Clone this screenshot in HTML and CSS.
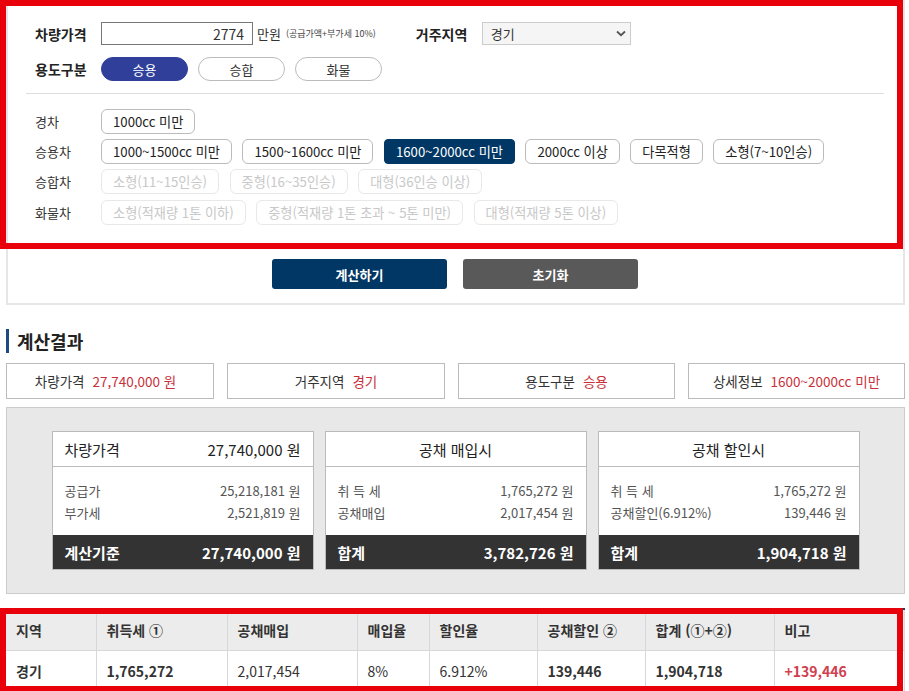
FILE: index.html
```html
<!doctype html>
<html lang="ko">
  <head>
    <meta charset="UTF-8" />
    <title>취득세 계산기</title>
    <link rel="stylesheet" href="styles.css">
  </head>

  <body>
    <div id="wrap">
      <div class="calc_box">
        <div class="line">
          <span class="tit">차량가격</span>
          <input type="text" class="price_input" value="2774" />
          <span class="unit">만원</span>
          <span class="note">(공급가액+부가세 10%)</span>
          <span class="tit tit_area">거주지역</span>
          <div class="select_box">
            <span>경기</span>
            <svg width="10" height="7" viewBox="0 0 10 7"><path d="M1 1.5 L5 5.2 L9 1.5" fill="none" stroke="#555" stroke-width="1.8"/></svg>
          </div>
        </div>
        <div class="line line_use">
          <span class="tit">용도구분</span>
          <button class="pill on">승용</button>
          <button class="pill">승합</button>
          <button class="pill">화물</button>
        </div>

        <div class="divider"></div>

        <div class="cc_row">
          <span class="cc_tit">경차</span>
          <button class="cc">1000cc 미만</button>
        </div>
        <div class="cc_row">
          <span class="cc_tit">승용차</span>
          <button class="cc">1000~1500cc 미만</button>
          <button class="cc">1500~1600cc 미만</button>
          <button class="cc on">1600~2000cc 미만</button>
          <button class="cc">2000cc 이상</button>
          <button class="cc">다목적형</button>
          <button class="cc">소형(7~10인승)</button>
        </div>
        <div class="cc_row">
          <span class="cc_tit">승합차</span>
          <button class="cc off">소형(11~15인승)</button>
          <button class="cc off">중형(16~35인승)</button>
          <button class="cc off">대형(36인승 이상)</button>
        </div>
        <div class="cc_row">
          <span class="cc_tit">화물차</span>
          <button class="cc off">소형(적재량 1톤 이하)</button>
          <button class="cc off">중형(적재량 1톤 초과 ~ 5톤 미만)</button>
          <button class="cc off">대형(적재량 5톤 이상)</button>
        </div>

        <div class="btn_area">
          <button class="btn_calc">계산하기</button>
          <button class="btn_reset">초기화</button>
        </div>
      </div>

      <h2 class="sec_tit">계산결과</h2>

      <ul class="summary">
        <li>차량가격<em>27,740,000 원</em></li>
        <li>거주지역<em>경기</em></li>
        <li>용도구분<em>승용</em></li>
        <li>상세정보<em>1600~2000cc 미만</em></li>
      </ul>

      <div class="result">
        <div class="card">
          <div class="card_head split"><span>차량가격</span><span>27,740,000 원</span></div>
          <div class="card_body">
            <p><span>공급가</span><span>25,218,181 원</span></p>
            <p><span>부가세</span><span>2,521,819 원</span></p>
          </div>
          <div class="card_foot"><span>계산기준</span><span>27,740,000 원</span></div>
        </div>
        <div class="card">
          <div class="card_head">공채 매입시</div>
          <div class="card_body">
            <p><span>취 득 세</span><span>1,765,272 원</span></p>
            <p><span>공채매입</span><span>2,017,454 원</span></p>
          </div>
          <div class="card_foot"><span>합계</span><span>3,782,726 원</span></div>
        </div>
        <div class="card">
          <div class="card_head">공채 할인시</div>
          <div class="card_body">
            <p><span>취 득 세</span><span>1,765,272 원</span></p>
            <p><span>공채할인(6.912%)</span><span>139,446 원</span></p>
          </div>
          <div class="card_foot"><span>합계</span><span>1,904,718 원</span></div>
        </div>
      </div>

      <table class="detail">
        <colgroup>
          <col style="width: 90px" />
          <col style="width: 131px" />
          <col style="width: 130px" />
          <col style="width: 72px" />
          <col style="width: 108px" />
          <col style="width: 108px" />
          <col style="width: 129px" />
          <col />
        </colgroup>
        <thead>
          <tr>
            <th>지역</th>
            <th>취득세 ①</th>
            <th>공채매입</th>
            <th>매입율</th>
            <th>할인율</th>
            <th>공채할인 ②</th>
            <th>합계 (①+②)</th>
            <th>비고</th>
          </tr>
        </thead>
        <tbody>
          <tr>
            <td class="b">경기</td>
            <td class="b">1,765,272</td>
            <td>2,017,454</td>
            <td>8%</td>
            <td>6.912%</td>
            <td class="b">139,446</td>
            <td class="b">1,904,718</td>
            <td class="b red">+139,446</td>
          </tr>
        </tbody>
      </table>
    </div>

    <div class="mark mark_top"></div>
    <div class="mark mark_bottom"></div>
  </body>
</html>
```

FILE: styles.css
```css
html,
body {
  margin: 0;
  padding: 0;
  background: #fff;
}

body {
  font-family: "Noto Sans CJK KR", "Noto Sans", sans-serif;
  color: #333;
  font-size: 13px;
  overflow: hidden;
}

button {
  font-family: inherit;
  cursor: pointer;
}

#wrap {
  width: 899px;
  margin-left: 6px;
}

/* 입력 영역 */
.calc_box {
  border: 2px solid #e6e6e6;
  padding: 20px 19px 14px 18px;
}

.line {
  display: flex;
  align-items: center;
  height: 23px;
  padding-left: 9px;
}

.line_use {
  height: 24px;
  margin-top: 12px;
}

.tit {
  width: 66px;
  font-size: 14px;
  font-weight: bold;
  color: #222;
}

.price_input {
  box-sizing: border-box;
  width: 152px;
  height: 23px;
  border: 1px solid #777;
  padding: 0 8px;
  text-align: right;
  font-family: inherit;
  font-size: 14px;
  color: #333;
}

.unit {
  margin-left: 4px;
  font-size: 13px;
}

.note {
  margin-left: 5px;
  font-size: 9px;
  color: #444;
}

.tit_area {
  margin-left: 40px;
}

.select_box {
  box-sizing: border-box;
  width: 149px;
  height: 23px;
  border: 1px solid #ccc;
  background: #f5f5f5;
  display: flex;
  align-items: center;
  justify-content: space-between;
  padding: 0 4px 0 8px;
  font-size: 13px;
  color: #333;
}

.pill {
  box-sizing: border-box;
  width: 87px;
  height: 24px;
  margin-right: 10px;
  border: 1px solid #bbb;
  border-radius: 12px;
  background: #fff;
  font-size: 13px;
  color: #333;
  padding: 0;
}

.pill.on {
  background: #30409a;
  border-color: #30409a;
  color: #fff;
}

.divider {
  height: 1px;
  background: #dedede;
  margin: 12px 0 15px;
}

.cc_row {
  display: flex;
  align-items: center;
  gap: 10.5px;
  padding-left: 9px;
  height: 25px;
  margin-bottom: 5px;
}

.cc_row:nth-child(6) {
  margin-bottom: 6px;
}

.cc_tit {
  width: 55.5px;
  font-size: 13px;
  color: #333;
}

.cc {
  box-sizing: border-box;
  height: 25px;
  padding: 0 11px;
  border: 1px solid #bbb;
  border-radius: 6px;
  background: #fff;
  font-size: 13.2px;
  color: #222;
}

.cc.on {
  background: #003764;
  border-color: #003764;
  color: #fff;
  border-radius: 4px;
}

.cc.off {
  border-color: #e8e8e8;
  color: #c8c8c8;
}

.btn_area {
  display: flex;
  justify-content: center;
  gap: 16px;
  margin-top: 34px;
}

.btn_calc,
.btn_reset {
  width: 175px;
  height: 30px;
  border: 0;
  border-radius: 3px;
  color: #fff;
  font-size: 13px;
  font-weight: bold;
}

.btn_calc {
  background: #003764;
}

.btn_reset {
  background: #595959;
}

/* 계산결과 */
.sec_tit {
  margin: 24px 0 10px;
  height: 24px;
  line-height: 24px;
  border-left: 3px solid #1d4a80;
  padding-left: 8px;
  font-size: 18px;
  color: #222;
}

.summary {
  list-style: none;
  margin: 0;
  padding: 0;
  display: grid;
  grid-template-columns: 208px 218px 217px 1fr;
  column-gap: 13px;
}

.summary li {
  box-sizing: border-box;
  height: 36px;
  border: 1px solid #bbb;
  display: flex;
  align-items: center;
  justify-content: center;
  font-size: 13.5px;
  color: #333;
}

.summary li:first-child {
  padding-right: 9px;
}

.summary em {
  font-style: normal;
  color: #c8303a;
  margin-left: 8px;
}

.result {
  margin-top: 8px;
  background: #e8e8e8;
  border: 1px solid #ccc;
  padding: 23px 0;
  display: flex;
  justify-content: center;
  gap: 11px;
}

.card {
  box-sizing: border-box;
  width: 262px;
  height: 139px;
  border: 1px solid #bbb;
  background: #fff;
  display: flex;
  flex-direction: column;
}

.card_head {
  height: 34px;
  border-bottom: 1px solid #bbb;
  display: flex;
  align-items: center;
  justify-content: center;
  font-size: 15px;
  color: #222;
}

.card_head.split,
.card_foot {
  justify-content: space-between;
  padding: 0 12px;
}

.card_body {
  flex: 1;
  padding: 12px 12px 0;
  font-size: 13px;
  color: #555;
}

.card_body p {
  margin: 0;
  height: 22px;
  display: flex;
  align-items: center;
  justify-content: space-between;
}

.card_foot {
  height: 34px;
  background: #333;
  color: #fff;
  display: flex;
  align-items: center;
  font-size: 15px;
  font-weight: bold;
}

/* 상세표 */
.detail {
  width: 899px;
  margin-top: 14px;
  border-collapse: collapse;
  table-layout: fixed;
  border-top: 2px solid #1d3b66;
  font-size: 14px;
}

.detail th,
.detail td {
  height: 40px;
  padding: 0 10px;
  text-align: left;
  border: 1px solid #d8d8d8;
  border-top: 0;
}

.detail th:first-child,
.detail td:first-child {
  border-left: 0;
}

.detail th {
  background: #ececec;
  color: #333;
}

.detail td {
  color: #333;
}

.detail .b {
  font-weight: bold;
}

.detail .red {
  color: #d0404e;
}

/* 표시 박스 */
.mark {
  position: absolute;
  left: 0;
  width: 903px;
  box-sizing: border-box;
  border: 6px solid #e8000b;
  pointer-events: none;
}

.mark_top {
  top: 0;
  height: 249px;
}

.mark_bottom {
  top: 608px;
  height: 84px;
}
```
